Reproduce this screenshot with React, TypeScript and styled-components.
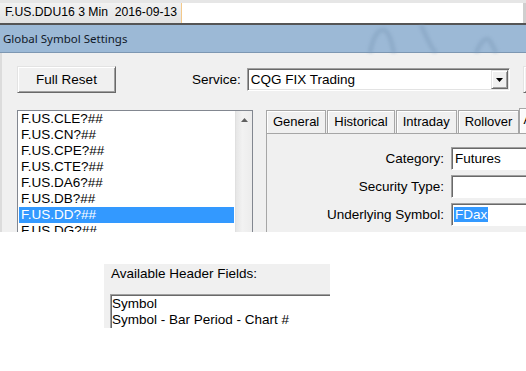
import styled, { createGlobalStyle } from 'styled-components';

const symbols = [
  'F.US.CLE?##',
  'F.US.CN?##',
  'F.US.CPE?##',
  'F.US.CTE?##',
  'F.US.DA6?##',
  'F.US.DB?##',
  'F.US.DD?##',
  'F.US.DG?##',
  'F.US.DJ?##',
];

const tabs = ['General', 'Historical', 'Intraday', 'Rollover'];

export default function App() {
  return (
    <Page>
      <GlobalStyle />
      <TopStrip>
        <ChartTitle>F.US.DDU16 3 Min  2016-09-13</ChartTitle>
        <ChartField />
      </TopStrip>

      <TitleBar>
        Global Symbol Settings
        <Ghost width='526' height='28' viewBox='0 0 526 28'>
          <path d='M370 28 C373 12 378 5 383 5 C388 5 391 14 394 28' />
          <path d='M421 0 C425 8 429 20 436 28' />
          <path d='M476 28 C481 16 486 12 489 15 C492 18 494 24 496 28' />
        </Ghost>
      </TitleBar>

      <Dialog>
        <TopRow>
          <Button type='button'>Full Reset</Button>
          <Label className='service'>Service:</Label>
          <Combo>
            <span>CQG FIX Trading</span>
            <DropButton>
              <svg width='7' height='4' viewBox='0 0 7 4'>
                <path d='M0 0h7L3.5 4z' fill='#000' />
              </svg>
            </DropButton>
          </Combo>
          <Button type='button' className='stub' />
        </TopRow>

        <MainRow>
          <ListBox>
            <Items>
              {symbols.map((s) => (
                <Item key={s} $selected={s === 'F.US.DD?##'}>
                  {s}
                </Item>
              ))}
            </Items>
            <ScrollBar>
              <svg width='7' height='4' viewBox='0 0 7 4'>
                <path d='M3.5 0L7 4H0z' fill='#606060' />
              </svg>
            </ScrollBar>
          </ListBox>

          <TabControl>
            <TabRow>
              {tabs.map((t) => (
                <Tab key={t}>{t}</Tab>
              ))}
              <Tab $active>Advanced</Tab>
            </TabRow>
            <TabPanel>
              <FieldLabel>Category:</FieldLabel>
              <Field>Futures</Field>
              <FieldLabel>Security Type:</FieldLabel>
              <Field />
              <FieldLabel>Underlying Symbol:</FieldLabel>
              <Field>
                <Selected>FDax</Selected>
              </Field>
            </TabPanel>
          </TabControl>
        </MainRow>
      </Dialog>

      <HeaderPanel>
        <Label className='caption'>Available Header Fields:</Label>
        <HeaderList>
          <div>Symbol</div>
          <div>Symbol - Bar Period - Chart #</div>
        </HeaderList>
      </HeaderPanel>
    </Page>
  );
}

const GlobalStyle = createGlobalStyle`
  html, body {
    margin: 0;
    padding: 0;
    background: #fff;
  }
`;

const Page = styled.div`
  width: 526px;
  height: 371px;
  overflow: hidden;
  background: #fff;
  display: flex;
  flex-direction: column;
  font-family: 'Liberation Sans', Arial, sans-serif;
  font-size: 13px;
  color: #000;
`;

const TopStrip = styled.div`
  display: flex;
  height: 20px;
  border-top: 3px solid #e6e6e6;
  border-bottom: 2px solid #555;
  flex-shrink: 0;
`;

const ChartTitle = styled.div`
  width: 176px;
  flex-shrink: 0;
  padding-left: 5px;
  line-height: 19px;
  font-size: 12.2px;
  white-space: pre;
  background: linear-gradient(#f2f2f2, #e2e2e2);
  border-right: 1px solid #f3c98b;
`;

const ChartField = styled.div`
  flex: 1;
  background: #fff;
  border-right: 3px solid #cfcfcf;
`;

const TitleBar = styled.div`
  position: relative;
  height: 27px;
  flex-shrink: 0;
  padding-left: 3px;
  line-height: 27px;
  font-family: 'Noto Sans', 'Open Sans', sans-serif;
  font-size: 11.5px;
  color: #101828;
  background: #9cb9d6;
  border-bottom: 1px solid #7d97b2;
`;

const Ghost = styled.svg`
  position: absolute;
  left: 0;
  top: 0;
  filter: blur(1.5px);

  path {
    fill: none;
    stroke: #7d9aba;
    stroke-width: 5;
    opacity: 0.4;
  }
`;

const Dialog = styled.div`
  height: 179px;
  flex-shrink: 0;
  overflow: hidden;
  background: #f0f0f0;
  padding: 13px 0 0 15px;
  border-left: 2px solid #dcdcdc;
  box-sizing: border-box;
`;

const TopRow = styled.div`
  display: flex;
  align-items: center;
  height: 27px;
  white-space: nowrap;

  .service {
    margin-left: 76px;
    margin-right: 6px;
  }

  .stub {
    margin-left: 13px;
    width: 40px;
  }
`;

const Button = styled.button`
  width: 99px;
  height: 27px;
  flex-shrink: 0;
  padding: 0;
  background: #f0f0f0;
  font-family: inherit;
  font-size: 13.5px;
  color: #000;
  border: 1px solid;
  border-color: #e3e3e3 #696969 #696969 #e3e3e3;
  box-shadow: inset 1px 1px #fff, inset -1px -1px #a0a0a0;
`;

const Label = styled.span`
  font-size: 13.5px;
  white-space: nowrap;

  &.caption {
    display: block;
    padding-left: 1px;
    line-height: 16px;
  }
`;

const Combo = styled.div`
  width: 263px;
  height: 23px;
  flex-shrink: 0;
  box-sizing: border-box;
  display: flex;
  align-items: center;
  justify-content: space-between;
  background: #fff;
  border: 1px solid;
  border-color: #a0a0a0 #fff #fff #a0a0a0;
  box-shadow: inset 1px 1px #696969, inset -1px -1px #e3e3e3;
  padding: 0 1px 0 3px;
  font-size: 13.5px;
`;

const DropButton = styled.div`
  width: 17px;
  height: 19px;
  box-sizing: border-box;
  display: flex;
  align-items: center;
  justify-content: center;
  background: #f0f0f0;
  border: 1px solid;
  border-color: #e3e3e3 #696969 #696969 #e3e3e3;
  box-shadow: inset 1px 1px #fff, inset -1px -1px #a0a0a0;
`;

const MainRow = styled.div`
  display: flex;
  align-items: flex-start;
  margin-top: 17px;
`;

const ListBox = styled.div`
  width: 236px;
  height: 150px;
  flex-shrink: 0;
  box-sizing: border-box;
  display: flex;
  background: #fff;
  border: 1px solid #828790;
`;

const Items = styled.div`
  flex: 1;
  padding: 0 1px;
`;

const Item = styled.div<{ $selected?: boolean }>`
  height: 16px;
  line-height: 16px;
  padding-left: 2px;
  font-size: 13.5px;
  background: ${(p) => (p.$selected ? '#3399ff' : 'transparent')};
  color: ${(p) => (p.$selected ? '#fff' : '#000')};
`;

const ScrollBar = styled.div`
  width: 17px;
  display: flex;
  justify-content: center;
  padding-top: 7px;
  box-sizing: border-box;
  background: linear-gradient(90deg, #e6e6e6, #f2f2f2 40%, #ececec);
  border-left: 1px solid #e0e0e0;
`;

const TabControl = styled.div`
  margin-left: 13px;
  flex-shrink: 0;
  display: flex;
  flex-direction: column;
`;

const TabRow = styled.div`
  display: flex;
  align-items: flex-end;
  height: 23px;
  white-space: nowrap;
`;

const Tab = styled.div<{ $active?: boolean }>`
  height: ${(p) => (p.$active ? '25px' : '22px')};
  line-height: 22px;
  padding: ${(p) => (p.$active ? '0 6px 0 3px' : '0 6px')};
  flex-shrink: 0;
  margin-left: ${(p) => (p.$active ? '0' : '1px')};
  margin-bottom: ${(p) => (p.$active ? '-1px' : '0')};
  font-size: 13px;
  background: ${(p) => (p.$active ? '#fbfbfb' : '#f0f0f0')};
  border: 1px solid #a6a6a6;
  border-bottom: none;
  box-shadow: inset 1px 1px #fff;

  &:first-child {
    margin-left: 0;
  }
`;

const TabPanel = styled.div`
  width: 300px;
  height: 120px;
  box-sizing: border-box;
  border: 1px solid #a6a6a6;
  background: #f0f0f0;
  padding-top: 13px;
  display: grid;
  grid-template-columns: 177px 100px;
  grid-auto-rows: 23px;
  row-gap: 5px;
  column-gap: 7px;
  align-items: center;
`;

const FieldLabel = styled.span`
  justify-self: end;
  font-size: 13.5px;
  white-space: nowrap;
`;

const Field = styled.div`
  height: 23px;
  box-sizing: border-box;
  background: #fff;
  border: 1px solid;
  border-color: #a0a0a0 #fff #fff #a0a0a0;
  box-shadow: inset 1px 1px #696969;
  padding: 1px 0 0 3px;
  line-height: 19px;
  font-size: 13.5px;
`;

const Selected = styled.span`
  margin-left: -1px;
  padding: 0 1px;
  background: #3399ff;
  color: #fff;
`;

const HeaderPanel = styled.div`
  width: 226px;
  height: 64px;
  margin: 32px 0 0 104px;
  padding: 2px 0 0 6px;
  box-sizing: border-box;
  background: #f0f0f0;
  overflow: hidden;
  flex-shrink: 0;
`;

const HeaderList = styled.div`
  width: 260px;
  height: 40px;
  margin-top: 12px;
  box-sizing: border-box;
  background: #fff;
  border-top: 1px solid #a0a0a0;
  border-left: 1px solid #a0a0a0;
  box-shadow: inset 1px 1px #696969;
  padding: 1px 0 0 1px;
  line-height: 16px;
  font-size: 13.5px;
`;
